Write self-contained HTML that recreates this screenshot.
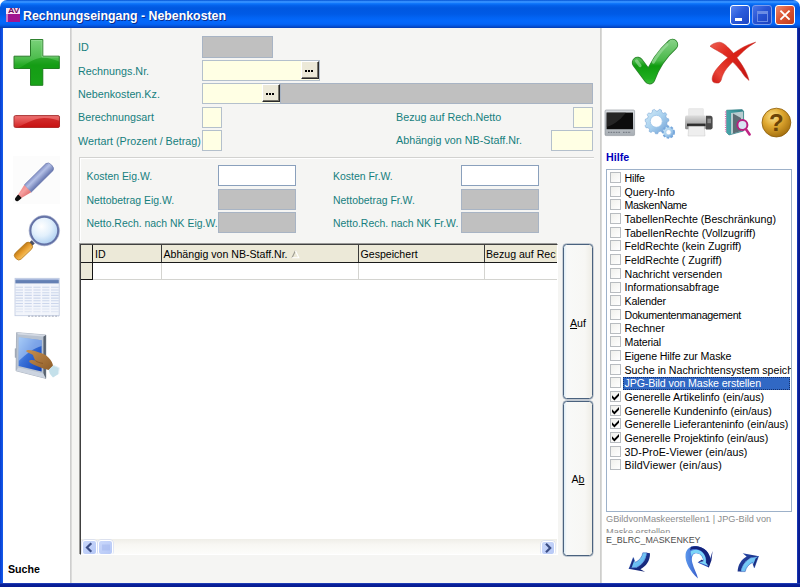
<!DOCTYPE html>
<html lang="de">
<head>
<meta charset="utf-8">
<title>Rechnungseingang - Nebenkosten</title>
<style>
html,body{margin:0;padding:0;background:#fff;}
body{width:800px;height:587px;overflow:hidden;position:relative;font-family:"Liberation Sans",sans-serif;font-size:10.6px;color:#000;}
.abs{position:absolute;}
#win{position:absolute;left:0;top:0;width:800px;height:587px;overflow:hidden;}
#titlebar{position:absolute;left:0;top:0;width:800px;height:28px;border-radius:7px 7px 0 0;
 background:linear-gradient(to bottom,#0650cc 0%,#1c78f4 3.5%,#3a94ff 6%,#2e8cff 9%,#0c74fa 13%,#0461ea 20%,#0058e0 29%,#005ae6 50%,#0264f4 64%,#0468fc 75%,#0464f6 86%,#0454dc 93%,#0444c0 97%,#0440b8 100%);}
#title{position:absolute;left:23px;top:8px;color:#fff;font-weight:bold;font-size:12.35px;line-height:16px;white-space:nowrap;text-shadow:1px 1px 0 #0a2c8c;letter-spacing:0px;}
#bl{position:absolute;left:0;top:28px;width:3px;height:559px;background:linear-gradient(to right,#0a3ccc,#0c50e4 60%,#1a5ce8);}
#br{position:absolute;left:797px;top:28px;width:3px;height:559px;background:linear-gradient(to right,#1c40c0,#0a2098 45%,#08188a);}
#bb{position:absolute;left:0;top:583px;width:800px;height:4px;background:linear-gradient(to bottom,#2c4cc4 0%,#0a229c 30%,#071a8e 100%);}
#leftpane{position:absolute;left:3px;top:28px;width:67px;height:555px;background:#fff;}
#sep1{position:absolute;left:70px;top:28px;width:2px;height:555px;background:linear-gradient(to right,#c8c8c8,#e2e2e0);}
#main{position:absolute;left:72px;top:28px;width:529px;height:555px;background:#f5f5f3;}
#sep2{position:absolute;left:600px;top:28px;width:2px;height:555px;background:linear-gradient(to right,#c8c8c6,#e0e0de);}
#rightpane{position:absolute;left:602px;top:28px;width:195px;height:555px;background:#fff;}
.lbl{position:absolute;font-size:10.75px;color:#15807e;white-space:nowrap;line-height:13px;height:13px;}
.lbl.g{font-size:10.45px;}
.fld{position:absolute;box-sizing:border-box;border:1px solid #a9b9c9;}
.gray{background:#c0c0c0;border-color:#a8b4c4;}
.yel{background:#ffffe4;border-color:#b4c0cc;}
.wht{background:#fff;border-color:#8aa0bc;}
.dots{position:absolute;box-sizing:border-box;border-top:1px solid #fff;border-left:1px solid #fff;border-right:1px solid #2a2a2a;border-bottom:1px solid #2a2a2a;background:#ece9d8;box-shadow:inset -1px -1px 0 #77756a;}
.dots i{position:absolute;width:2px;height:2px;background:#000;top:8px;}
.xpbtn{position:absolute;box-sizing:border-box;border:1px solid #4a627e;border-radius:3.5px;background:linear-gradient(to right,#dcecf6 0%,#f8f9f8 10%,#f7f7f4 75%,#eeede6 100%);text-align:center;box-shadow:0 0 0 0.4px #8c9cb0;}
.hd{white-space:nowrap;line-height:13px;color:#000;}
.sbtn{box-sizing:border-box;border:1px solid #fff;border-radius:3px;background:linear-gradient(135deg,#cad8fb,#b6c8f6);box-shadow:0 0 0 0.5px #c8d4f4;}
.sbtn svg{position:absolute;left:-1px;top:-1px;}
.wb{top:5px;width:20px;height:20px;box-sizing:border-box;border:1px solid #fff;border-radius:3px;}
.chk{position:absolute;width:9px;height:9px;border:1px solid #b8bcc0;background:linear-gradient(135deg,#f0f0ec,#fff);}
.item{position:absolute;white-space:nowrap;line-height:13px;height:13px;font-size:10.65px;}
</style>
</head>
<body>
<div id="win">
 <div id="titlebar"></div>
 <div id="bl"></div><div id="br"></div>
 <div id="leftpane"></div>
 <div id="sep1"></div>
 <div id="main"></div>
 <div id="sep2"></div>
 <div id="rightpane"></div>
 <div id="bb"></div>
 <div id="title">Rechnungseingang - Nebenkosten</div>
 <!--TITLEICONS-->
 <!-- app icon -->
 <div class="abs" style="left:6px;top:8px;width:14px;height:14px;background:#a01490;overflow:hidden;">
  <div class="abs" style="left:0;top:0;width:14px;height:6px;background:#fbe6f6;"></div>
  <div class="abs" style="left:0;top:6px;width:2px;height:8px;background:#d07cc4;"></div>
  <div class="abs" style="left:2px;top:-1px;font-size:7px;line-height:7px;font-weight:bold;color:#6c0c60;letter-spacing:-0.2px;transform:scaleX(1.25);transform-origin:0 0;">AV</div>
 </div>
 <!-- window buttons -->
 <div class="abs wb" style="left:730px;background:linear-gradient(135deg,#5a86f0 0%,#2c5cdc 45%,#1c44c4 100%);"><div class="abs" style="left:4px;top:12px;width:7px;height:3px;background:#fff;"></div></div>
 <div class="abs wb" style="left:752px;border-color:#7c9cec;background:linear-gradient(135deg,#4a76e8 0%,#2854d4 45%,#1c42c0 100%);"><div class="abs" style="left:4px;top:5px;width:9px;height:7px;border:1px solid #6c8ce4;border-top-width:3px;"></div></div>
 <div class="abs wb" style="left:775px;background:linear-gradient(135deg,#ec8c70 0%,#dc5434 45%,#c03c1c 100%);"><svg class="abs" style="left:0;top:0" width="18" height="18" viewBox="0 0 18 18"><path d="M4.4 4.6 L13.6 13.6 M13.6 4.6 L4.4 13.6" stroke="#fff" stroke-width="1.9" stroke-linecap="butt"/></svg></div>
 <!--/TITLEICONS-->
 <!--LEFTICONS-->
 <svg class="abs" style="left:0;top:0;" width="800" height="587" viewBox="0 0 800 587">
  <defs>
   <linearGradient id="gPlus" x1="0" y1="0" x2="0" y2="1"><stop offset="0" stop-color="#7ad27a"/><stop offset="0.42" stop-color="#4cbc4c"/><stop offset="0.56" stop-color="#24aa24"/><stop offset="1" stop-color="#2cb62c"/></linearGradient>
   <linearGradient id="gMinus" x1="0" y1="0" x2="0" y2="1"><stop offset="0" stop-color="#ee7474"/><stop offset="0.5" stop-color="#e24c4c"/><stop offset="1" stop-color="#d42424"/></linearGradient>
   <clipPath id="cpPlus"><path d="M30.5 39.5H42.8V56.2H59.3V68.5H42.8V85.3H30.5V68.5H14V56.2H30.5Z"/></clipPath>
   <clipPath id="cpMinus"><rect x="14" y="115.6" width="45.5" height="11.8" rx="1.5"/></clipPath>
   <linearGradient id="gPencil" x1="0" y1="0" x2="0" y2="1"><stop offset="0" stop-color="#8794c8"/><stop offset="0.35" stop-color="#b4c0e6"/><stop offset="1" stop-color="#6474ae"/></linearGradient>
   <linearGradient id="gPink" x1="0" y1="0" x2="0" y2="1"><stop offset="0" stop-color="#f08c8c"/><stop offset="0.4" stop-color="#f6a0a0"/><stop offset="1" stop-color="#e07070"/></linearGradient>
   <radialGradient id="gLens" cx="0.4" cy="0.35" r="0.7"><stop offset="0" stop-color="#ffffff"/><stop offset="0.5" stop-color="#e2f0fc"/><stop offset="1" stop-color="#a8ccf0"/></radialGradient>
   <linearGradient id="gHandle" x1="0" y1="0" x2="0" y2="1"><stop offset="0" stop-color="#f4c060"/><stop offset="0.5" stop-color="#eaa030"/><stop offset="1" stop-color="#c07c18"/></linearGradient>
   <linearGradient id="gScreen" x1="0" y1="0" x2="1" y2="1"><stop offset="0" stop-color="#8cbcf4"/><stop offset="0.45" stop-color="#3870d8"/><stop offset="1" stop-color="#1040b4"/></linearGradient>
   <linearGradient id="gHand" x1="0" y1="0" x2="1" y2="1"><stop offset="0" stop-color="#c89050"/><stop offset="1" stop-color="#8c5c28"/></linearGradient>
  </defs>
  <!-- plus -->
  <path d="M30.5 39.5H42.8V56.2H59.3V68.5H42.8V85.3H30.5V68.5H14V56.2H30.5Z" fill="url(#gPlus)" stroke="#2a7c2a" stroke-width="1" stroke-linejoin="round"/>
  <g clip-path="url(#cpPlus)"><path d="M10 72 C 22 68 30 60 40 58 C 48 57 56 60 64 64 L64 90 L10 90 Z" fill="#069006" opacity="0.5"/><path d="M31.3 40.3H42V56.9H58.5" fill="none" stroke="#a8e4a8" stroke-width="0.8" opacity="0.7"/></g>
  <!-- minus -->
  <rect x="14" y="115.6" width="45.5" height="11.8" rx="1.5" fill="url(#gMinus)" stroke="#a83434" stroke-width="1"/>
  <g clip-path="url(#cpMinus)"><path d="M10 130 C 24 126 30 119 44 118 C 52 118 58 120 62 122 L62 130 Z" fill="#c00606" opacity="0.6"/></g>
  <!-- pencil -->
  <rect x="13" y="156" width="47" height="48" fill="#fcfcfc"/>
  <g transform="translate(16.3,199.8) rotate(-44.6)">
   <path d="M16 -5 H46.5 Q49.6 -4.6 49.6 0 Q49.6 4.6 46.5 5 H16 Z" fill="url(#gPencil)" stroke="#6674aa" stroke-width="0.6"/>
   <path d="M3 -1.9 L16 -5 V5 L3 1.9 Z" fill="url(#gPink)"/>
   <path d="M-0.5 0 Q-0.5 -1.2 1 -1.5 L4.5 -1.9 V1.9 L1 1.5 Q-0.5 1.2 -0.5 0Z" fill="#101010" stroke="#101010" stroke-width="1.2" stroke-linejoin="round"/>
  </g>
  <!-- magnifier -->
  <g transform="translate(32.5,242.5) rotate(136.5)">
   <rect x="-1" y="-2.2" width="5" height="4.4" fill="#4c5064"/>
   <rect x="2" y="-4.2" width="21" height="8.4" rx="3.6" fill="url(#gHandle)" stroke="#b07418" stroke-width="0.7"/>
  </g>
  <circle cx="44.3" cy="230.6" r="14" fill="url(#gLens)" stroke="#6472a6" stroke-width="2.2"/>
  <circle cx="44.3" cy="230.6" r="15.3" fill="none" stroke="#9aa6c8" stroke-width="0.8" opacity="0.7"/>
  <!-- table icon -->
  <g>
   <rect x="15" y="278.3" width="44.2" height="37.4" fill="#f2f5fb" stroke="#c0cae0" stroke-width="0.8"/>
   <rect x="15.4" y="280" width="43.4" height="3.4" fill="#6480b4"/>
   <rect x="15.4" y="278.7" width="43.4" height="1.4" fill="#a8b8dc"/>
   <path d="M15.4 287.3H58.8M15.4 290H58.8M15.4 292.7H58.8M15.4 295.4H58.8M15.4 298.1H58.8M15.4 300.8H58.8M15.4 303.5H58.8M15.4 306.2H58.8" stroke="#ccd6ec" stroke-width="1.1"/>
   <path d="M15.4 309H58.8M15.4 311.7H58.8" stroke="#dde4f2" stroke-width="1"/>
   <path d="M23.8 284V315M32.6 284V315M41.4 284V315M50.2 284V315" stroke="#f4f6fc" stroke-width="1.6"/>
   <path d="M28 316.2H59" stroke="#9098ac" stroke-width="0.8" stroke-dasharray="2 1.4"/>
  </g>
  <!-- touch screen -->
  <g>
   <path d="M14.8 348.5 L16.4 348.3 L16.4 358 L14.8 357.6 Z" fill="#a4acb8"/>
   <path d="M16.6 332.6 L45.9 335 L45.9 378.4 L16 370.8 Z" fill="#b8c2d0" stroke="#8c96a4" stroke-width="0.6"/>
   <path d="M43.4 334.9 L45.9 335 L45.9 378.4 L43.4 377.6 Z" fill="#586270"/>
   <path d="M16.6 332.6 L45.9 335 L43.6 336.6 L18.4 334.6 Z" fill="#d4dae4"/>
   <path d="M16 370.8 L45.9 378.4 L43.4 373.6 L18.4 367.4 Z" fill="#ccd4e0"/>
   <path d="M18.8 337.2 L41.6 340.2 L41.6 371.4 L18.6 366 Z" fill="url(#gScreen)"/>
   <path d="M18.8 337.2 L41.6 340.2 L41.6 346 C 34 348 26 354 18.7 361 Z" fill="#c4dcfa" opacity="0.5"/>
   <path d="M26.6 350.4 C 29 349.4 33 350.4 37 351.8 C 41 352.8 45.4 354.4 48.4 357.4 C 51.4 360.4 53 363.6 53 366 L 48.6 370 C 45.6 369 41 368 38 366.4 C 35 365.2 31 364 29.4 362 C 28.6 360.6 30 359.6 32 360 L 35.4 360.6 C 34 358.2 33.4 356.4 33 355 C 30.8 353.6 28 352.6 26.8 351.8 C 26 351.4 26 350.7 26.6 350.4 Z" fill="url(#gHand)"/>
   <path d="M35.4 360.6 C 37 362 40 363 43 363.4" fill="none" stroke="#74481c" stroke-width="0.8" opacity="0.7"/>
   <path d="M48.6 370 L53.2 365.2 L59.2 367.8 L58.6 374 L53 377.6 L50 374 Z" fill="#c4e0ea"/>
   <path d="M53.2 365.2 L59.2 367.8 L58.6 374" fill="none" stroke="#e4f0f6" stroke-width="1"/>
  </g>
 </svg>
 <!--/LEFTICONS-->
 <div class="abs" style="left:8px;top:563px;font-weight:bold;font-size:10.65px;line-height:13px;color:#000;">Suche</div>
 <!--FORM-->
 <!-- form labels -->
 <div class="lbl" style="left:78px;top:41px;">ID</div>
 <div class="lbl" style="left:78px;top:64.5px;">Rechnungs.Nr.</div>
 <div class="lbl" style="left:78px;top:88px;">Nebenkosten.Kz.</div>
 <div class="lbl" style="left:78px;top:111px;">Berechnungsart</div>
 <div class="lbl" style="left:78px;top:135px;">Wertart (Prozent / Betrag)</div>
 <div class="lbl" style="left:396px;top:111px;">Bezug auf Rech.Netto</div>
 <div class="lbl" style="left:396px;top:134px;">Abhängig von NB-Staff.Nr.</div>
 <!-- form fields -->
 <div class="fld gray" style="left:202px;top:36px;width:71px;height:22px;"></div>
 <div class="fld yel" style="left:202px;top:60px;width:118px;height:21px;"></div>
 <div class="dots" style="left:301px;top:61px;width:18px;height:18px;"><i style="left:3px"></i><i style="left:6px"></i><i style="left:9px"></i></div>
 <div class="fld yel" style="left:202px;top:83px;width:79px;height:21px;"></div>
 <div class="dots" style="left:262px;top:84px;width:18px;height:18px;"><i style="left:3px"></i><i style="left:6px"></i><i style="left:9px"></i></div>
 <div class="fld gray" style="left:280px;top:83px;width:313px;height:21px;"></div>
 <div class="fld yel" style="left:202px;top:107px;width:20px;height:21px;"></div>
 <div class="fld yel" style="left:202px;top:130px;width:20px;height:21px;"></div>
 <div class="fld yel" style="left:573px;top:107px;width:20px;height:21px;"></div>
 <div class="fld yel" style="left:551px;top:130px;width:42px;height:21px;"></div>
 <!-- group box -->
 <div class="abs" style="left:79px;top:157px;width:514px;height:83px;border-top:1px solid #d2d2d0;border-left:1px solid #d2d2d0;box-shadow:inset 1px 1px 0 #fff;"></div>
 <div class="lbl g" style="left:86.5px;top:170px;">Kosten Eig.W.</div>
 <div class="lbl g" style="left:86.5px;top:193.5px;">Nettobetrag Eig.W.</div>
 <div class="lbl g" style="left:86.5px;top:216.5px;">Netto.Rech. nach NK Eig.W.</div>
 <div class="lbl g" style="left:333px;top:170px;">Kosten Fr.W.</div>
 <div class="lbl g" style="left:333px;top:193.5px;">Nettobetrag Fr.W.</div>
 <div class="lbl g" style="left:333px;top:216.5px;">Netto.Rech. nach NK Fr.W.</div>
 <div class="fld wht" style="left:218px;top:165px;width:78px;height:21px;"></div>
 <div class="fld gray" style="left:218px;top:189px;width:78px;height:21px;"></div>
 <div class="fld gray" style="left:218px;top:212px;width:78px;height:21px;"></div>
 <div class="fld wht" style="left:461px;top:165px;width:78px;height:21px;"></div>
 <div class="fld gray" style="left:461px;top:189px;width:78px;height:21px;"></div>
 <div class="fld gray" style="left:461px;top:212px;width:78px;height:21px;"></div>
 <!--/FORM-->
 <!--GRID-->
 <!-- data grid -->
 <div class="abs" style="left:80px;top:244px;width:478px;height:311px;box-sizing:border-box;background:#fff;border-left:1px solid #404040;border-top:1px solid #404040;border-right:1px solid #fff;border-bottom:1px solid #fff;box-shadow:-1px -1px 0 #9a9a98;overflow:hidden;">
  <!-- header -->
  <div class="abs" style="left:0;top:0;width:476px;height:17px;background:#ece9d8;border-bottom:1px solid #1a1a1a;"></div>
  <div class="abs" style="left:11px;top:0;width:1px;height:35px;background:#151515;"></div>
  <div class="abs" style="left:0;top:18px;width:11px;height:16px;background:#ece9d8;border-bottom:1px solid #151515;"></div>
  <div class="abs" style="left:80px;top:0;width:1px;height:17px;background:#3a3a3a;"></div>
  <div class="abs" style="left:277px;top:0;width:1px;height:17px;background:#3a3a3a;"></div>
  <div class="abs" style="left:403px;top:0;width:1px;height:17px;background:#3a3a3a;"></div>
  <div class="abs" style="left:80px;top:18px;width:1px;height:17px;background:#d4d4d0;"></div>
  <div class="abs" style="left:277px;top:18px;width:1px;height:17px;background:#d4d4d0;"></div>
  <div class="abs" style="left:403px;top:18px;width:1px;height:17px;background:#d4d4d0;"></div>
  <div class="abs" style="left:12px;top:34px;width:464px;height:1px;background:#d4d4d0;"></div>
  <div class="abs hd" style="left:14px;top:3px;">ID</div>
  <div class="abs hd" style="left:82.5px;top:3px;">Abhängig von NB-Staff.Nr.<svg width="9" height="9" viewBox="0 0 9 9" style="position:absolute;left:127px;top:2px;"><path d="M1 7.8 L4.4 0.8" stroke="#9c9a90" stroke-width="1.1" fill="none"/><path d="M4.4 0.8 L7.8 7.8 H1" stroke="#fff" stroke-width="1.1" fill="none"/></svg></div>
  <div class="abs hd" style="left:279.5px;top:3px;">Gespeichert</div>
  <div class="abs hd" style="left:405px;top:3px;width:69.5px;overflow:hidden;">Bezug auf Rech.Netto</div>
  <!-- scrollbar -->
  <div class="abs" style="left:0;top:294px;width:476px;height:16px;background:linear-gradient(to bottom,#efeee8 0%,#f8f7f3 35%,#fdfdfb 100%);"></div>
  <div class="abs sbtn" style="left:1px;top:295px;width:15px;height:15px;"><svg width="15" height="15" viewBox="0 0 15 15"><path d="M9.3 3.2 L5 7.5 L9.3 11.8" fill="none" stroke="#3c4e86" stroke-width="2.2"/></svg></div>
  <div class="abs sbtn" style="left:17px;top:295px;width:15px;height:15px;"><svg width="15" height="15" viewBox="0 0 15 15"><path d="M5 4.5V10.5M7 4.5V10.5M9 4.5V10.5M11 4.5V10.5" stroke="#a0b4ec" stroke-width="1"/></svg></div>
  <div class="abs sbtn" style="left:460px;top:296px;width:14px;height:14px;"><svg width="14" height="14" viewBox="0 0 14 14"><path d="M5 2.8 L9.2 7 L5 11.2" fill="none" stroke="#3c4e86" stroke-width="2.2"/></svg></div>
 </div>
 <!-- Auf / Ab buttons -->
 <div class="xpbtn" style="left:563px;top:244px;width:30px;height:155px;"><span style="position:absolute;left:0;width:28px;top:72px;line-height:13px;"><u>A</u>uf</span></div>
 <div class="xpbtn" style="left:563px;top:401px;width:30px;height:155px;"><span style="position:absolute;left:0;width:28px;top:71px;line-height:13px;">A<u>b</u></span></div>
 <!--/GRID-->
 <!--RIGHT-->
 <div class="abs" style="left:606px;top:150.5px;color:#0000bc;font-weight:bold;font-size:10.7px;line-height:13px;">Hilfe</div>
 <div id="lb" class="abs" style="left:606px;top:169px;width:186px;height:343px;box-sizing:border-box;border:1px solid #9db1c9;background:#fff;overflow:hidden;">
  <div class="chk" style="left:3px;top:2.00px;"></div>
  <div class="item" style="left:17.5px;top:1.90px;letter-spacing:-0.200px;">Hilfe</div>
  <div class="chk" style="left:3px;top:15.69px;"></div>
  <div class="item" style="left:17.5px;top:15.59px;">Query-Info</div>
  <div class="chk" style="left:3px;top:29.38px;"></div>
  <div class="item" style="left:17.5px;top:29.28px;letter-spacing:-0.330px;">MaskenName</div>
  <div class="chk" style="left:3px;top:43.07px;"></div>
  <div class="item" style="left:17.5px;top:42.97px;">TabellenRechte (Beschränkung)</div>
  <div class="chk" style="left:3px;top:56.76px;"></div>
  <div class="item" style="left:17.5px;top:56.66px;letter-spacing:0.060px;">TabellenRechte (Vollzugriff)</div>
  <div class="chk" style="left:3px;top:70.45px;"></div>
  <div class="item" style="left:17.5px;top:70.35px;">FeldRechte (kein Zugriff)</div>
  <div class="chk" style="left:3px;top:84.14px;"></div>
  <div class="item" style="left:17.5px;top:84.04px;">FeldRechte ( Zugriff)</div>
  <div class="chk" style="left:3px;top:97.83px;"></div>
  <div class="item" style="left:17.5px;top:97.73px;">Nachricht versenden</div>
  <div class="chk" style="left:3px;top:111.52px;"></div>
  <div class="item" style="left:17.5px;top:111.42px;">Informationsabfrage</div>
  <div class="chk" style="left:3px;top:125.21px;"></div>
  <div class="item" style="left:17.5px;top:125.11px;letter-spacing:-0.160px;">Kalender</div>
  <div class="chk" style="left:3px;top:138.90px;"></div>
  <div class="item" style="left:17.5px;top:138.80px;letter-spacing:-0.300px;">Dokumentenmanagement</div>
  <div class="chk" style="left:3px;top:152.59px;"></div>
  <div class="item" style="left:17.5px;top:152.49px;">Rechner</div>
  <div class="chk" style="left:3px;top:166.28px;"></div>
  <div class="item" style="left:17.5px;top:166.18px;letter-spacing:-0.190px;">Material</div>
  <div class="chk" style="left:3px;top:179.97px;"></div>
  <div class="item" style="left:17.5px;top:179.87px;letter-spacing:-0.115px;">Eigene Hilfe zur Maske</div>
  <div class="chk" style="left:3px;top:193.66px;"></div>
  <div class="item" style="left:17.5px;top:193.56px;">Suche in Nachrichtensystem speichern</div>
  <div class="abs" style="left:16px;top:206.75px;width:167px;height:13.4px;background:#3168c4;box-sizing:border-box;border:1px dotted #14306c;"></div>
  <div class="chk" style="left:3px;top:207.35px;"></div>
  <div class="item" style="left:17.5px;top:207.25px;color:#fff;letter-spacing:-0.110px;">JPG-Bild von Maske erstellen</div>
  <div class="chk" style="left:3px;top:221.04px;"><svg width="9" height="9" viewBox="0 0 9 9" style="position:absolute;left:0;top:0"><path d="M1 3.3 L3.4 5.7 L8 1.1 V3.8 L3.4 8.4 L1 6 Z" fill="#000"/></svg></div>
  <div class="item" style="left:17.5px;top:220.94px;">Generelle Artikelinfo (ein/aus)</div>
  <div class="chk" style="left:3px;top:234.73px;"><svg width="9" height="9" viewBox="0 0 9 9" style="position:absolute;left:0;top:0"><path d="M1 3.3 L3.4 5.7 L8 1.1 V3.8 L3.4 8.4 L1 6 Z" fill="#000"/></svg></div>
  <div class="item" style="left:17.5px;top:234.63px;">Generelle Kundeninfo (ein/aus)</div>
  <div class="chk" style="left:3px;top:248.42px;"><svg width="9" height="9" viewBox="0 0 9 9" style="position:absolute;left:0;top:0"><path d="M1 3.3 L3.4 5.7 L8 1.1 V3.8 L3.4 8.4 L1 6 Z" fill="#000"/></svg></div>
  <div class="item" style="left:17.5px;top:248.32px;">Generelle Lieferanteninfo (ein/aus)</div>
  <div class="chk" style="left:3px;top:262.11px;"><svg width="9" height="9" viewBox="0 0 9 9" style="position:absolute;left:0;top:0"><path d="M1 3.3 L3.4 5.7 L8 1.1 V3.8 L3.4 8.4 L1 6 Z" fill="#000"/></svg></div>
  <div class="item" style="left:17.5px;top:262.01px;">Generelle Projektinfo (ein/aus)</div>
  <div class="chk" style="left:3px;top:275.80px;"></div>
  <div class="item" style="left:17.5px;top:275.70px;letter-spacing:0.080px;">3D-ProE-Viewer (ein/aus)</div>
  <div class="chk" style="left:3px;top:289.49px;"></div>
  <div class="item" style="left:17.5px;top:289.39px;letter-spacing:0.150px;">BildViewer (ein/aus)</div>
 </div>
 <div class="abs" style="left:606px;top:513px;width:195px;height:19.5px;overflow:hidden;color:#8c8c8c;font-size:9.6px;line-height:12.5px;transform:scaleX(0.957);transform-origin:0 0;">GBildvonMaskeerstellen1 | JPG-Bild von Maske erstellen</div>
 <div class="abs" style="left:605.8px;top:533px;color:#4c4c4c;font-size:9.6px;line-height:13px;white-space:nowrap;transform:scaleX(0.923);transform-origin:0 0;">E_BLRC_MASKENKEY</div>
 <!--/RIGHT-->
 <!--RICONS-->
 <svg class="abs" style="left:0;top:0;" width="800" height="587" viewBox="0 0 800 587">
  <defs>
   <linearGradient id="gChk" gradientUnits="userSpaceOnUse" x1="0" y1="38" x2="0" y2="86"><stop offset="0" stop-color="#8cd48c"/><stop offset="0.47" stop-color="#48b848"/><stop offset="0.58" stop-color="#0f9c0f"/><stop offset="0.85" stop-color="#20ae20"/><stop offset="1" stop-color="#48c448"/></linearGradient>
   <linearGradient id="gX" gradientUnits="userSpaceOnUse" x1="708" y1="40" x2="752" y2="84"><stop offset="0" stop-color="#f06a5a"/><stop offset="0.35" stop-color="#e02a20"/><stop offset="1" stop-color="#c01010"/></linearGradient>
   <linearGradient id="gX2" gradientUnits="userSpaceOnUse" x1="756" y1="42" x2="712" y2="84"><stop offset="0" stop-color="#d41c14"/><stop offset="0.5" stop-color="#dc2418"/><stop offset="0.8" stop-color="#e84438"/><stop offset="1" stop-color="#cc1410"/></linearGradient><linearGradient id="gMon" x1="0" y1="0" x2="0" y2="1"><stop offset="0" stop-color="#d8dce0"/><stop offset="1" stop-color="#a8aeb4"/></linearGradient>
   <linearGradient id="gGear" x1="0" y1="0" x2="1" y2="1"><stop offset="0" stop-color="#d4ecf8"/><stop offset="0.5" stop-color="#a8d0ee"/><stop offset="1" stop-color="#6c9cd4"/></linearGradient>
   <linearGradient id="gPrn" x1="0" y1="0" x2="0" y2="1"><stop offset="0" stop-color="#dcdcdc"/><stop offset="0.5" stop-color="#b4b4b4"/><stop offset="1" stop-color="#8c8c8c"/></linearGradient>
   <radialGradient id="gHelp" cx="0.38" cy="0.3" r="0.75"><stop offset="0" stop-color="#fbe28c"/><stop offset="0.45" stop-color="#e0a830"/><stop offset="1" stop-color="#a06c0c"/></radialGradient>
   <linearGradient id="gBook" x1="0" y1="0" x2="1" y2="0"><stop offset="0" stop-color="#48a8ac"/><stop offset="1" stop-color="#2c8088"/></linearGradient>
   <linearGradient id="gArrL" x1="0" y1="0" x2="1" y2="1"><stop offset="0" stop-color="#8ce0fc"/><stop offset="1" stop-color="#54a8ec"/></linearGradient><linearGradient id="gArrD" x1="0" y1="0" x2="1" y2="1"><stop offset="0" stop-color="#2c50b4"/><stop offset="1" stop-color="#0c1660"/></linearGradient><linearGradient id="gArrM" x1="0" y1="0" x2="1" y2="0"><stop offset="0" stop-color="#5c98ec"/><stop offset="0.5" stop-color="#3458c8"/><stop offset="1" stop-color="#2440a8"/></linearGradient>
  </defs>
  <!-- green check -->
  <path d="M637.6 62.6 L649.6 78.6 C 654 66 662 54 672.4 44.6" fill="none" stroke="#2c842c" stroke-width="11.6" stroke-linecap="round" stroke-linejoin="round"/>
  <path d="M637.6 62.6 L649.6 78.6 C 654 66 662 54 672.4 44.6" fill="none" stroke="url(#gChk)" stroke-width="10" stroke-linecap="round" stroke-linejoin="round"/>
  <path d="M636.6 61 L640 65.6 M667 44.6 C 662 49 657 55.6 653.4 62" fill="none" stroke="#a4e0a4" stroke-width="3.2" stroke-linecap="round" opacity="0.6"/>
  <!-- red X -->
  <path d="M710 46.2 C 712 44 715.6 42.4 719.4 42.2 C 722.4 42.4 725 44.4 727.1 46.6 C 730.4 49.6 733.4 53 736 56.6 C 738.8 60.2 741.6 64 743.7 67.7 C 746 71.6 748 76 749 80.4 C 747.6 79 746.2 77.8 744.8 76.5 C 742.4 73 740 69.6 737.1 66.5 C 734 63 730.6 59.8 727.1 57.1 C 724 54.6 720.6 52.4 717.1 50.5 C 714.6 49.2 712.2 47.8 710 46.2 Z" fill="url(#gX)" stroke="#c42c24" stroke-width="0.5"/>
  <path d="M755.7 42.2 C 748 44.5 744 46.6 739.3 49.4 C 733 53.4 727 58 722.7 62.1 C 718 67 715 70.6 713.8 73.2 C 712.4 76 712 78 712.2 79.8 C 712.6 82 713.8 82.8 715 82.8 C 716.6 83.2 717.8 83.2 718.8 82.9 C 720.4 82 721.2 80.4 721.6 78.7 C 722 77 722.4 76 723.2 74.3 C 725 70 728.6 66 732.6 62.1 C 736 58.6 740 54.4 743.7 51 C 747 48 751 45 755.7 42.2 Z" fill="url(#gX2)" stroke="#c42c24" stroke-width="0.5"/>
  <!-- monitor -->
  <rect x="605" y="110" width="29.6" height="25.6" rx="1.2" fill="url(#gMon)" stroke="#8c9298" stroke-width="0.6"/>
  <rect x="606.6" y="112.6" width="26.4" height="16.6" fill="#0c0c0c"/>
  <path d="M606.6 112.6 H626 C 622 118 616 124 606.6 127 Z" fill="#3a3a3a" opacity="0.55"/>
  <path d="M608 132.4H620M623 132.4H631" stroke="#787e86" stroke-width="1.4" stroke-dasharray="1.6 1"/>
  <!-- gears -->
  <g fill="url(#gGear)" stroke="#6c9cd0" stroke-width="0.5">
   <path id="gearbig" d="M656.3 121.3 m-11.2 0 l0.3 -2.2 l2 -0.6 l0.8 -1.9 l-1 -1.9 l1.4 -1.8 l2 0.6 l1.7 -1.2 l0.1 -2.1 l2.1 -0.8 l1.4 1.6 l2.1 0 l1.3 -1.7 l2.1 0.7 l0.2 2.1 l1.7 1.2 l2 -0.7 l1.4 1.7 l-0.9 1.9 l0.8 2 l2 0.6 l0.3 2.2 l-1.8 1.1 l-0.3 2.1 l1.4 1.6 l-1 2 l-2.1 -0.1 l-1.4 1.6 l0.4 2.1 l-1.9 1.1 l-1.7 -1.3 l-2 0.6 l-0.8 2 l-2.2 0 l-0.8 -2 l-2 -0.6 l-1.7 1.3 l-1.9 -1.1 l0.4 -2.1 l-1.4 -1.6 l-2.1 0.1 l-1 -2 l1.4 -1.6 l-0.3 -2.1 Z"/>
   <circle cx="668.5" cy="132.2" r="5.6" stroke-dasharray="2.4 1.6" stroke-width="1.8" stroke="#78a8dc"/>
  </g>
  <circle cx="656.3" cy="121.3" r="6" fill="#fff" stroke="#9cc4e8" stroke-width="0.8"/>
  <circle cx="668.5" cy="132.2" r="2.6" fill="#fff" stroke="#9cc4e8" stroke-width="0.6"/>
  <!-- printer -->
  <rect x="688.8" y="108.8" width="14.4" height="7.4" fill="#ececec" stroke="#d8d8d8" stroke-width="0.5"/>
  <path d="M686.6 115.6 H705 Q706 115.6 706 117 V128 Q706 129.2 704.8 129.2 H686.4 Q685 129.2 685 128 V117.4 Q685 115.6 686.6 115.6 Z" fill="url(#gPrn)"/>
  <path d="M706 115.8 H710.6 Q712.6 116 712.6 118 V127.6 Q712.6 129.4 710.8 129.4 H706 Z" fill="#4a4a4a"/>
  <rect x="707.4" y="118.6" width="3.6" height="4.6" fill="#8a8a8a"/>
  <rect x="687" y="123.6" width="18.6" height="2.6" fill="#2c2c2c"/>
  <path d="M688.8 126.4 H704.2 L705 136 H688 Z" fill="#eeeeee" stroke="#c8c8c8" stroke-width="0.5"/>
  <!-- book + search -->
  <path d="M726.6 110.2 L742 109.6 L743.6 111 V131 L729 135 L726.6 132.6 Z" fill="url(#gBook)" stroke="#2c7880" stroke-width="0.6"/>
  <path d="M731 113 L743 111.4 V130.6 L731 134 Z" fill="#b8ccd0"/>
  <path d="M733 113.4 L741 118 V131 L733 133.4 Z" fill="#5c6c74"/>
  <path d="M725.6 111.6V132" stroke="#e060a8" stroke-width="1.4" stroke-dasharray="1 1.2"/>
  <circle cx="742.4" cy="125" r="5" fill="#d8e4f4" stroke="#b82080" stroke-width="2"/>
  <path d="M745.8 129 L749.6 134.4" stroke="#c02484" stroke-width="2.6" stroke-linecap="round"/>
  <!-- help -->
  <circle cx="776.4" cy="122.6" r="14.4" fill="url(#gHelp)" stroke="#8c5c08" stroke-width="0.8"/>
  <text x="776.4" y="131.2" text-anchor="middle" font-family="Liberation Sans, sans-serif" font-weight="bold" font-size="24" fill="#6c4408">?</text>
  <!-- arrows -->
  <g stroke-linejoin="round">
   <!-- arrow 1 down-left -->
   <path d="M646.6 552.8 L650 553.3 C 650.2 561 646 566.4 640.4 569.2 L 645 571.7 L 628.4 568.7 L 629.6 567.6 L 636.6 567.4 C 642 565 646 560 646.6 552.8 Z" fill="url(#gArrD)"/>
   <path d="M642.8 552.8 L646.8 552.8 C 646 560 642 565 636.6 567.4 L 629.4 567.9 L 633.3 557.6 L 635.3 562.4 C 639.4 560.4 642.2 557 642.8 552.8 Z" fill="url(#gArrL)" stroke="#2a4cb0" stroke-width="0.5"/>
   <path d="M633.3 557.6 L 629.4 567.9 L 631.6 567.8 L 634.2 560.4 Z" fill="#1c2c80"/>
   <!-- arrow 2 u-turn -->
   <path d="M698 578.6 C 690 571 684.6 562 685.6 554 C 686.6 548 692 545.4 697.4 546.2 C 705 547.4 709.4 553 710.2 558.6 L 712.6 551 L 708.8 567.4 L 697.6 562.6 L 703.6 561 C 702.6 556 699.6 552.6 695.6 553.2 C 691.6 554 691.4 559 692.4 563 C 693.6 568.6 697 573.6 698 578.6 Z" fill="url(#gArrM)"/>
   <path d="M691 546.8 C 696 545 703 547 706.6 551 C 709 554 710.2 557 710.4 559.4 L 712.6 551 L 711.4 560.6 L 708.8 567.4 L 706 564 C 707.6 558 704 551 698 549.4 C 695 548.6 692 549 690 550.4 Z" fill="#14247c"/>
   <path d="M690.6 551.6 C 693 549.6 697 549 700.6 551 C 704.6 553.4 706.4 558 705.8 562.6 L 708.6 566 L 699.4 562.4 L 703.6 561 C 703.4 556.6 700.4 552.8 695.8 553 C 693.6 553.2 692 554.6 691.4 556.4 Z" fill="#7cd4f8"/>
   <path d="M697.6 562.6 L 703.6 561 L 702 559.6 L 697.6 562.6 Z" fill="#14247c"/>
   <!-- arrow 3 up-right -->
   <path d="M737.6 571.6 C 738 564 741.6 559.4 746.6 556.4 L 742.7 553.2 L 759 556.2 L 757.6 557.4 L 750.8 557.8 C 746 560.6 742 565 741 571.6 Z" fill="url(#gArrD)"/>
   <path d="M740.8 571.6 C 742 565 746 560.6 750.8 557.8 L 758.4 556.6 L 754.3 567.8 L 752.6 562.4 C 748.6 564.4 746 567.6 745.2 571.6 Z" fill="url(#gArrL)" stroke="#2a4cb0" stroke-width="0.5"/>
   <path d="M758.4 556.6 L 754.3 567.8 L 753.2 564.6 L 755.6 558.4 Z" fill="#1c2c80"/>
  </g>
 </svg>
 <!--/RICONS-->
</div>
</body>
</html>
